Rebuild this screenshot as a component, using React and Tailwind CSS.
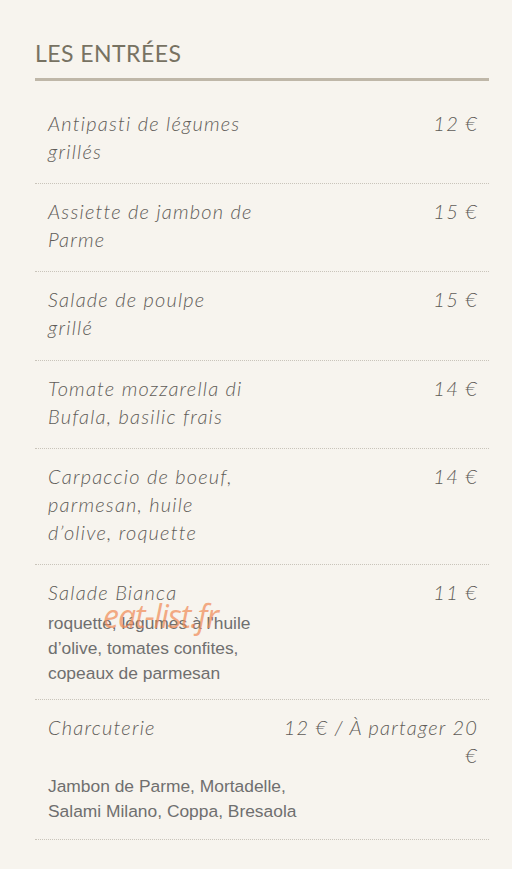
import React from "react";

const items = [
  { title: ["Antipasti de légumes", "grillés"], price: "12 €" },
  { title: ["Assiette de jambon de", "Parme"], price: "15 €" },
  { title: ["Salade de poulpe", "grillé"], price: "15 €" },
  { title: ["Tomate mozzarella di", "Bufala, basilic frais"], price: "14 €" },
  { title: ["Carpaccio de boeuf,", "parmesan, huile", "d’olive, roquette"], price: "14 €" },
  {
    title: ["Salade Bianca"],
    price: "11 €",
    desc: "roquette, légumes à l'huile d’olive, tomates confites, copeaux de parmesan",
    mark: true,
  },
  {
    title: ["Charcuterie"],
    price: "12 € / À partager 20 €",
    desc: "Jambon de Parme, Mortadelle, Salami Milano, Coppa, Bresaola",
    last: true,
  },
];

export default function App() {
  return (
    <div className="min-h-[869px] w-[512px] bg-[#f7f4ee] pl-[35px] pr-[23px] pt-[37px]">
      <h2 className="font-['Lato',sans-serif] text-[23px] leading-[32px] tracking-[0.02em] text-[#777262] border-b-[3px] border-[#bfb7a8] pb-[9px]">
        LES ENTRÉES
      </h2>
      <ul className="mt-[15px]">
        {items.map((it, i) => (
          <li
            key={i}
            className={
              "relative border-b border-dotted border-[#c9c4ba] pl-[13px] pr-[11px] pt-[13px] " +
              (it.last ? "pb-[20px]" : i === 2 ? "pb-[19px]" : "pb-[18px]")
            }
          >
            <div className="flex justify-between gap-[10px] font-['Lato',sans-serif] italic font-light text-[20px] leading-[28px] tracking-[0.06em] text-[#5f5c58]">
              <span className="w-[215px] whitespace-nowrap">
                {it.title.map((l, j) => (
                  <span key={j} className="block">
                    {l}
                  </span>
                ))}
              </span>
              <span className="w-[200px] text-right">{it.price}</span>
            </div>
            {it.desc && (
              <p className="mt-[5px] mb-[-5px] w-[250px] font-['Liberation_Sans',Arial,sans-serif] text-[17.4px] leading-[25px] text-[#6f6f6f]">
                {it.desc}
              </p>
            )}
            {it.mark && (
              <span className="absolute left-[68px] top-[34px] font-['Open_Sans',sans-serif] italic text-[32px] leading-[34px] tracking-[-0.03em] text-[#f08a55] opacity-70">
                eat-list.fr
              </span>
            )}
          </li>
        ))}
      </ul>
    </div>
  );
}
